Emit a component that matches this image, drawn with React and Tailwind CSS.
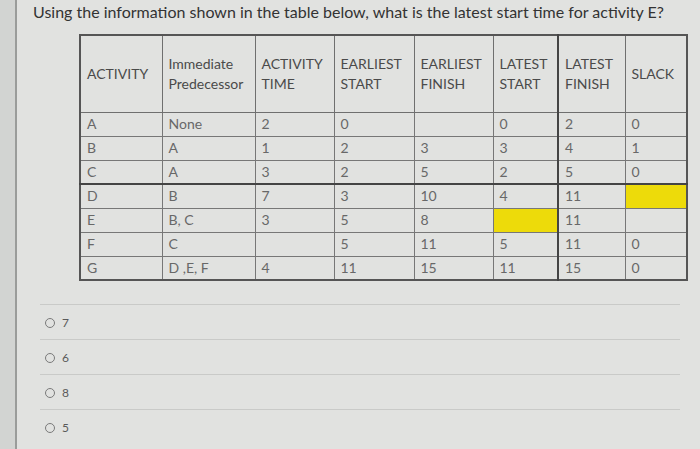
import React from 'react';

const headers = [
  { w: 'w-[82px]', lines: ['ACTIVITY'] },
  { w: 'w-[93px]', lines: ['Immediate', 'Predecessor'] },
  { w: 'w-[79px]', lines: ['ACTIVITY', 'TIME'] },
  { w: 'w-[80px]', lines: ['EARLIEST', 'START'] },
  { w: 'w-[79px]', lines: ['EARLIEST', 'FINISH'] },
  { w: 'w-[65px]', lines: ['LATEST', 'START'] },
  { w: 'w-[67px]', lines: ['LATEST', 'FINISH'] },
  { w: 'w-[62px]', lines: ['SLACK'] },
];

// null = yellow (the blank to fill in)
const rows = [
  ['A', 'None', '2', '0', '', '0', '2', '0'],
  ['B', 'A', '1', '2', '3', '3', '4', '1'],
  ['C', 'A', '3', '2', '5', '2', '5', '0'],
  ['D', 'B', '7', '3', '10', '4', '11', null],
  ['E', 'B, C', '3', '5', '8', null, '11', ''],
  ['F', 'C', '', '5', '11', '5', '11', '0'],
  ['G', 'D ,E, F', '4', '11', '15', '11', '15', '0'],
];

const options = ['7', '6', '8', '5'];

export default function App() {
  return (
    <div
      className="flex h-[449px] w-[700px] overflow-hidden bg-[#e1e2e0]"
      style={{ fontFamily: 'Lato, "Open Sans", sans-serif' }}
    >
      {/* edge of the page in the photo */}
      <div className="w-[15px] shrink-0 bg-[#d2d4d2]" />
      <div className="w-[2px] shrink-0 bg-[#9a9c9a]" />

      <div className="flex-1">
        <p className="pl-[16px] pt-[1px] text-[16px] leading-[21px] text-[#333]">
          Using the information shown in the table below, what is the latest start time for activity E?
        </p>

        <table className="ml-[62px] mt-[12px] table-fixed border-collapse border-2 border-[#555] text-[14px]">
          <thead>
            <tr className="h-[77px]">
              {headers.map((h, i) => (
                <th
                  key={i}
                  className={`${h.w} border border-[#6f6f6f] px-[6px] text-left align-middle font-normal leading-[20px] text-[#4a4a4a] ${
                    i === 5 ? 'border-r-2 border-r-[#444]' : ''
                  }`}
                >
                  {h.lines.map((l) => (
                    <div key={l} className="whitespace-nowrap">{l}</div>
                  ))}
                </th>
              ))}
            </tr>
          </thead>
          <tbody>
            {rows.map((r, ri) => (
              <tr key={ri} className="h-[24px]">
                {r.map((c, ci) => (
                  <td
                    key={ci}
                    className={`border border-[#777] px-[6px] leading-[20px] text-[#686868] ${
                      c === null ? 'bg-[#eddb0a]' : ''
                    } ${ri === 2 ? 'border-b-2 border-b-[#444]' : ''} ${
                      ci === 5 ? 'border-r-2 border-r-[#444]' : ''
                    }`}
                  >
                    {c}
                  </td>
                ))}
              </tr>
            ))}
          </tbody>
        </table>

        <div className="ml-[23px] mr-[20px] mt-[23px]">
          {options.map((o) => (
            <div
              key={o}
              className="flex h-[35px] items-center gap-[7px] border-t border-[#c9cac8] pl-[5px] pt-[1px]"
            >
              <span className="h-[10px] w-[10px] rounded-full border-[1.5px] border-[#7a7a7a]" />
              <span className="text-[12px] text-[#5a5a5a]">{o}</span>
            </div>
          ))}
        </div>
      </div>
    </div>
  );
}
